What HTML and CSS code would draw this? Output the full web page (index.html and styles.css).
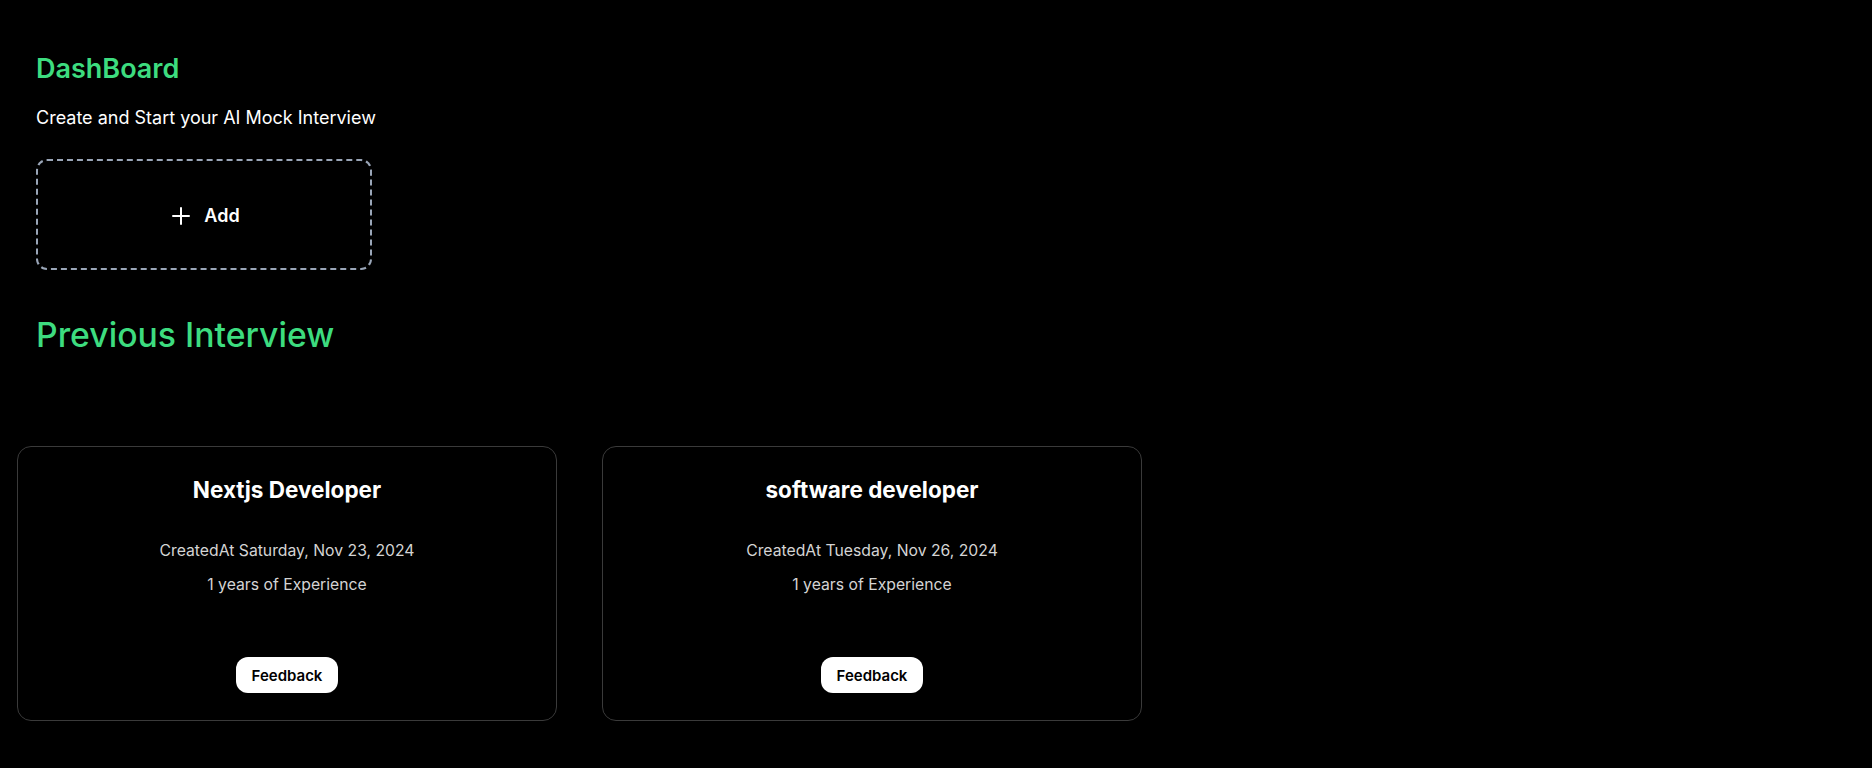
FILE: index.html
```html
<!DOCTYPE html>
<html lang="en">
<head>
<meta charset="utf-8">
<title>Dashboard</title>
<link rel="stylesheet" href="styles.css">
</head>
<body>
<main class="page">
  <section class="intro">
    <h2 class="title">DashBoard</h2>
    <p class="sub">Create and Start your AI Mock Interview</p>
    <div class="add-card">
      <svg class="plus" width="18" height="18" viewBox="0 0 18 18" aria-hidden="true">
        <path d="M1 9h16M9 1v16" stroke="#fff" stroke-width="2" stroke-linecap="round" fill="none"/>
      </svg>
      <span class="add-label">Add</span>
    </div>
    <h2 class="prev">Previous Interview</h2>
  </section>
  <div class="cards">
    <div class="card">
      <h3 class="card-title">Nextjs Developer</h3>
      <p class="card-date">CreatedAt Saturday, Nov 23, 2024</p>
      <p class="card-exp">1 years of Experience</p>
      <button class="feedback">Feedback</button>
    </div>
    <div class="card">
      <h3 class="card-title">software developer</h3>
      <p class="card-date">CreatedAt Tuesday, Nov 26, 2024</p>
      <p class="card-exp">1 years of Experience</p>
      <button class="feedback">Feedback</button>
    </div>
  </div>
</main>
</body>
</html>
```
FILE: styles.css
```css
* { box-sizing: border-box; }
html, body {
  margin: 0;
  background: #000;
  color: #fff;
  font-family: Inter, "Noto Sans", "Liberation Sans", sans-serif;
}
.page {
  padding: 51px 0 40px 17px;
}
.intro {
  padding-left: 19px;
}
.title {
  margin: 0;
  font-size: 27px;
  line-height: 36px;
  font-weight: 600;
  color: #3ddc7f;
}
.sub {
  margin: 17px 0 0;
  font-size: 18px;
  line-height: 27px;
  color: #fff;
}
.add-card {
  margin-top: 28px;
  width: 336px;
  height: 111px;
  padding-top: 2px;
  border: 2px dashed #9aa6b8;
  border-radius: 11px;
  display: flex;
  align-items: center;
  justify-content: center;
  gap: 14px;
}
.plus { display: block; margin-left: 4px; }
.add-label {
  font-size: 18px;
  font-weight: 600;
  line-height: 27px;
}
.prev {
  margin: 45px 0 0;
  font-size: 33.75px;
  line-height: 40.5px;
  font-weight: 500;
  color: #3ddc7f;
}
.cards {
  margin-top: 90px;
  display: grid;
  grid-template-columns: 540px 540px;
  gap: 45px;
}
.card {
  border: 1px solid #3a3a3a;
  border-radius: 14px;
  padding: 27px;
  display: flex;
  flex-direction: column;
  align-items: center;
  text-align: center;
}
.card-title {
  margin: 0;
  font-size: 22.5px;
  line-height: 31.5px;
  font-weight: 700;
}
.card-date {
  margin: 35px 0 0;
  font-size: 15.75px;
  line-height: 22.5px;
  color: #d4d4d4;
}
.card-exp {
  margin: 11px 0 0;
  font-size: 15.75px;
  line-height: 22.5px;
  color: #d4d4d4;
}
.feedback {
  margin-top: 61px;
  height: 36px;
  padding: 0 16px;
  border: none;
  border-radius: 12px;
  background: #fff;
  color: #000;
  font-family: inherit;
  font-size: 15px;
  font-weight: 600;
}
```
